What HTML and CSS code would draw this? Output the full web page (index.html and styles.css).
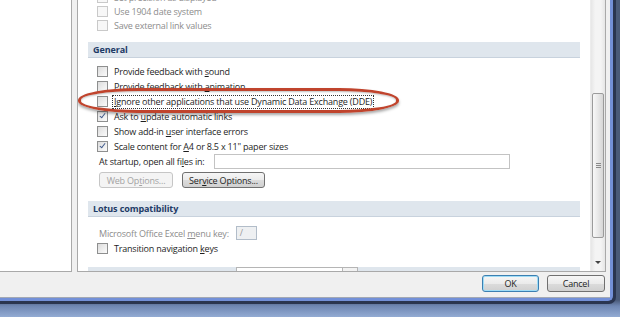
FILE: index.html
```html
<!DOCTYPE html>
<html lang="en">
<head>
  <meta charset="UTF-8">
  <title>Excel Options - Advanced</title>
  <link rel="stylesheet" href="styles.css">
</head>
<body>

  <div class="outer">
    <div class="frame">
      <div class="dialog">

        <div class="panes">
          <div class="nav"></div>

          <div class="main">
            <div class="content">
              <div class="row dim"><span class="cb off"></span><span>Set precision as displayed</span></div>
              <div class="row dim"><span class="cb off"></span><span>Use 1904 date system</span></div>
              <div class="row dim"><span class="cb off"></span><span>Save external link values</span></div>

              <div class="section">General</div>

              <div class="row"><span class="cb"></span><span>Provide feedback with <u>s</u>ound</span></div>
              <div class="row"><span class="cb"></span><span>Provide feedback with <u>a</u>nimation</span></div>
              <div class="row"><span class="cb"></span><span class="focus"><u>I</u>gnore other applications that use Dynamic Data Exchange (DDE)</span></div>
              <div class="row"><span class="cb on"></span><span>Ask to <u>u</u>pdate automatic links</span></div>
              <div class="row"><span class="cb"></span><span>Show add-in <u>u</u>ser interface errors</span></div>
              <div class="row"><span class="cb on"></span><span>Scale content for <u>A</u>4 or 8.5 x 11" paper sizes</span></div>
              <div class="row field"><span>At startup, open all fi<u>l</u>es in:</span><span class="textbox"></span></div>
              <div class="buttons">
                <button class="btn small disabled">Web Op<u>t</u>ions...</button>
                <button class="btn small">Ser<u>v</u>ice Options...</button>
              </div>

              <div class="section lotus">Lotus compatibility</div>

              <div class="row field dim"><span>Microsoft Office Excel <u>m</u>enu key:</span><span class="keybox">/</span></div>
              <div class="row"><span class="cb"></span><span>Transition navigation <u>k</u>eys</span></div>

              <div class="section next"><span class="combo"></span><span class="combo-btn"></span></div>
            </div>

            <div class="scrollbar">
              <div class="thumb"><span class="grip"></span></div>
              <div class="arrow"></div>
            </div>

            <div class="ring"></div>
          </div>
        </div>

        <div class="footer">
          <button class="btn default">OK</button>
          <button class="btn">Cancel</button>
        </div>

      </div>
    </div>
  </div>

</body>
</html>
```

FILE: styles.css
```css
body {
  margin: 0;
  padding: 0;
  width: 620px;
  height: 317px;
  overflow: hidden;
  background: linear-gradient(to bottom, #4a5a78 0, #4a5a78 300px, #6f87b3 306px, #93abd3 317px);
  font-family: 'Open Sans', 'Noto Sans', sans-serif;
  font-size: 9px;
  letter-spacing: -0.2px;
  color: #1e1e1e;
}

.outer {
  width: 616px;
  border-right: 3px solid #2a3550;
  border-bottom: 3px solid #2a3550;
  border-bottom-right-radius: 7px;
  box-sizing: border-box;
  background: #2a3550;
}

.frame {
  border-right: 3px solid #7390d8;
  border-bottom: 3px solid #7390d8;
  border-bottom-right-radius: 5px;
}

.dialog {
  width: 610px;
  height: 297px;
  background-color: #f0f0f0;
  border-bottom: 1px solid #a3a9b4;
  display: flex;
  flex-direction: column;
}

.panes {
  display: flex;
  height: 272px;
}

.nav {
  width: 71px;
  height: 271px;
  background-color: white;
  border-right: 1px solid #a9a9a9;
  border-bottom: 1px solid #a9a9a9;
}

.main {
  margin-left: 5px;
  width: 527px;
  height: 271px;
  background-color: white;
  border: 1px solid #a9a9a9;
  border-top: none;
  display: flex;
  position: relative;
  overflow: hidden;
}

.content {
  width: 513px;
  margin-top: -10px;
}

.row {
  height: 15px;
  display: flex;
  align-items: center;
  padding-left: 19px;
  white-space: nowrap;
}

.row.dim {
  height: 14px;
  color: #8d8d8d;
}

.row.field {
  padding-left: 21px;
}

u {
  text-decoration: underline;
  text-underline-offset: 1px;
}

.cb {
  width: 9px;
  height: 9px;
  border: 1px solid #8e8f8f;
  background: linear-gradient(135deg, #dcdcdc, #fbfbfb);
  margin-right: 6px;
  flex-shrink: 0;
  position: relative;
}

.cb.off {
  border-color: #c9c9c9;
  background: #f7f7f7;
}

.cb.on::after {
  content: '';
  position: absolute;
  left: 3px;
  top: 0px;
  width: 2px;
  height: 5px;
  border-right: 1.5px solid #3f5a8c;
  border-bottom: 1.5px solid #3f5a8c;
  transform: rotate(38deg);
}

.focus {
  outline: 1px dotted #333;
  outline-offset: 0;
  padding: 0 1px;
  margin-left: -1px;
  line-height: 12px;
}

.section {
  margin: 10px 10px 0 10px;
  height: 15px;
  line-height: 15px;
  padding-left: 5px;
  background-color: #dfe6ed;
  border-bottom: 1px solid #c8d2dd;
  font-weight: bold;
  letter-spacing: -0.1px;
  color: #1e3b66;
  margin-bottom: 6px;
}

.section.lotus {
  margin-top: 13px;
  margin-bottom: 8px;
}

.section.next {
  margin-top: 11px;
  position: relative;
}

.combo {
  position: absolute;
  left: 148px;
  top: 0;
  width: 105px;
  height: 14px;
  background-color: white;
  border: 1px solid #b5b5b5;
}

.combo-btn {
  position: absolute;
  left: 254px;
  top: 0;
  width: 14px;
  height: 14px;
  background-color: #f2f2f2;
  border: 1px solid #b5b5b5;
}

.textbox {
  width: 294px;
  height: 13px;
  border: 1px solid #c3c3c3;
  background-color: white;
  margin-left: 10px;
}

.keybox {
  height: 12px;
  width: 16px;
  border: 1px solid #b2bdc9;
  background-color: #eef0f2;
  margin-left: 7px;
  color: #9a9a9a;
  line-height: 12px;
  padding-left: 3px;
}

.row.field.dim {
  height: 16px;
}

.buttons {
  display: flex;
  gap: 9px;
  padding-left: 21px;
  margin-top: 3px;
}

.btn {
  font-family: 'Open Sans', 'Noto Sans', sans-serif;
  font-size: 9px;
  letter-spacing: -0.2px;
  white-space: nowrap;
  color: #1e1e1e;
  height: 17px;
  padding: 0;
  border: 1px solid #707070;
  border-radius: 3px;
  background: linear-gradient(to bottom, #f6f6f6 0, #ebebeb 50%, #dcdcdc 51%, #d0d0d0 100%);
  cursor: pointer;
}

.btn.small {
  height: 16px;
}

.btn.disabled {
  width: 74px;
  color: #a3a3a3;
  border-color: #c6c6c6;
  background: #f4f4f4;
}

.buttons .btn:last-child {
  width: 83px;
}

.scrollbar {
  width: 14px;
  height: 271px;
  background: linear-gradient(to right, #e6e6e6, #f4f4f4 30%, #f4f4f4 70%, #e6e6e6);
  border-left: 1px solid #ececec;
  position: relative;
}

.thumb {
  position: absolute;
  left: 1px;
  top: 93px;
  width: 10px;
  height: 143px;
  border: 1px solid #9b9b9b;
  border-radius: 2px;
  background: linear-gradient(to right, #f8f8f8, #e8e8e8 50%, #d6d6d6);
  display: flex;
  align-items: center;
  justify-content: center;
}

.grip {
  width: 5px;
  height: 1px;
  background-color: #8a8a8a;
  box-shadow: 0 2px 0 #8a8a8a, 0 4px 0 #8a8a8a;
  margin-top: -4px;
}

.arrow {
  position: absolute;
  left: 4px;
  top: 261px;
  border-left: 3px solid transparent;
  border-right: 3px solid transparent;
  border-top: 3px solid #444;
}

.ring {
  position: absolute;
  left: 0;
  top: 88px;
  width: 315px;
  height: 19px;
  border: 3px solid #c0442d;
  border-radius: 60px / 12px;
  box-shadow: 0 2px 3px rgba(0, 0, 0, 0.35), inset 0 1px 2px rgba(0, 0, 0, 0.25);
  pointer-events: none;
}

.footer {
  display: flex;
  justify-content: flex-end;
  gap: 8px;
  padding: 3px 5px 0 0;
}

.footer .btn {
  width: 58px;
}

.btn.default {
  width: 57px;
  border-color: #3c7fb1;
  box-shadow: inset 0 0 0 1px #9fdcf6;
}
```
